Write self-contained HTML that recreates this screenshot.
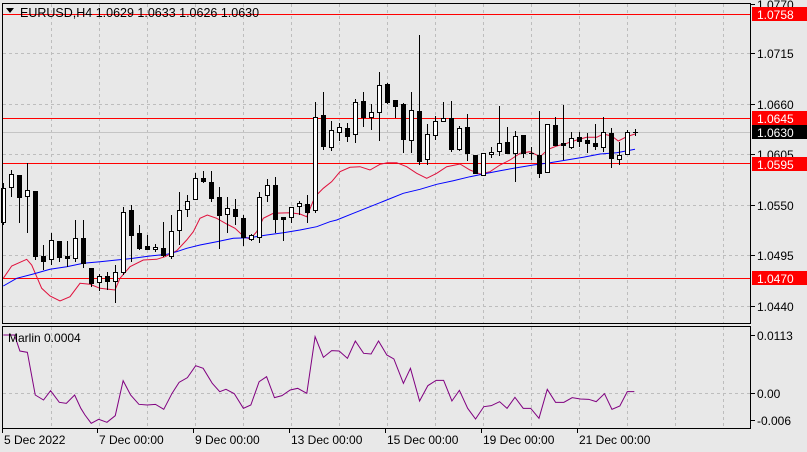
<!DOCTYPE html>
<html><head><meta charset="utf-8"><style>
html,body{margin:0;padding:0;background:#e8e8e8;width:807px;height:452px;overflow:hidden}
svg{display:block}
text{font-family:"Liberation Sans",sans-serif;font-size:12px;fill:#000}
</style></head><body>
<svg id="s" width="807" height="452" viewBox="0 0 807 452" xmlns="http://www.w3.org/2000/svg">
<rect width="807" height="452" fill="#e8e8e8"/>
<g id="grid" stroke="#bdbdbd" stroke-dasharray="3,3" stroke-width="1"></g>
<line x1="2" y1="132.5" x2="750" y2="132.5" stroke="#c4c4c4"/>
<g stroke="#ff0000" stroke-width="1">
<line x1="2" y1="14.5" x2="750" y2="14.5"/>
<line x1="2" y1="118.5" x2="750" y2="118.5"/>
<line x1="2" y1="163.5" x2="750" y2="163.5"/>
<line x1="2" y1="278.5" x2="750" y2="278.5"/>
</g>
<g id="ma"></g>
<g id="candles"></g>
<polyline fill="none" stroke="#800080" stroke-width="1" transform="translate(0,325) scale(0.4146,0.3333)" vector-effect="non-scaling-stroke" points="8,30 35,30 48,78 66,82 85,210 105,225 122,197 143,232 160,235 180,210 195,250 205,270 220,295 238,283 258,292 278,272 297,167 315,210 335,238 355,240 375,238 395,253 415,205 432,172 452,158 472,122 490,130 512,175 530,200 545,193 565,206 587,250 605,240 625,170 643,155 662,218 680,212 700,195 718,190 740,205 760,35 780,97 800,77 818,78 838,100 857,48 877,85 895,87 913,48 933,90 950,102 973,175 990,130 1012,228 1032,182 1052,166 1070,166 1090,228 1108,196 1128,250 1147,282 1167,245 1185,242 1205,230 1223,250 1242,217 1262,250 1280,250 1300,280 1320,193 1340,232 1360,232 1380,218 1400,222 1420,223 1438,230 1458,206 1476,253 1495,243 1513,200 1530,200"/>
<rect x="2.5" y="3.5" width="748" height="320" fill="none" stroke="#000"/>
<rect x="2.5" y="326.5" width="748" height="102" fill="none" stroke="#000"/>
<polygon points="6,8 14,8 10,13" fill="#000"/>
<text x="20" y="17" style="font-size:12.5px">EURUSD,H4  1.0629 1.0633 1.0626 1.0630</text>
<text x="8" y="342">Marlin 0.0004</text>
<g id="axis"></g>
</svg>
<script>
const NS="http://www.w3.org/2000/svg";
function el(p,t,a,txt){const e=document.createElementNS(NS,t);for(const k in a)e.setAttribute(k,a[k]);if(txt)e.textContent=txt;p.appendChild(e);return e;}
const g=document.getElementById('grid');
[53,104,154,205,255,306].forEach(y=>el(g,'line',{x1:3,x2:750,y1:y+.5,y2:y+.5}));
el(g,'line',{x1:3,x2:750,y1:393.5,y2:393.5});
for(let x=51;x<750;x+=48){el(g,'line',{x1:x+.5,x2:x+.5,y1:4,y2:323});el(g,'line',{x1:x+.5,x2:x+.5,y1:327,y2:428});}
const C=[[1,188,222,183,225],[1,174,187,170,197],[0,175,197,175,223],[1,190,196,163,233],[0,191,256,191,260],[0,256,261,245,270],[1,240,259,233,265],[0,241,257,241,262],[0,256,258,241,267],[1,238,258,220,262],[0,238,263,220,268],[0,268,283,268,287],[1,276,282,274,291],[0,276,281,272,290],[1,272,281,265,303],[1,212,272,207,275],[0,210,235,205,262],[0,233,248,225,250],[0,246,249,235,250],[1,247,249,244,252],[0,248,255,222,257],[1,231,256,215,259],[1,210,230,192,245],[1,201,209,195,217],[1,178,199,173,200],[0,178,181,171,183],[0,182,198,171,202],[0,197,215,187,249],[1,208,214,197,233],[0,209,216,199,225],[0,218,237,215,246],[1,235,239,234,241],[1,197,237,192,243],[1,185,195,179,202],[0,185,219,177,233],[0,217,219,217,241],[1,207,217,207,223],[1,203,206,201,215],[0,204,212,195,223],[1,117,210,102,213],
[0,115,146,92,150],[1,130,147,121,151],[1,127,132,123,141],[0,128,136,123,142],[1,102,134,99,143],[0,101,117,92,127],[1,112,117,104,130],[1,85,112,72,141],[0,84,102,83,104],[0,100,106,100,118],[0,104,139,103,153],[1,110,140,92,153],[0,111,161,35,165],[1,134,159,124,165],[1,121,135,116,140],[1,118,121,102,122],[0,118,149,101,152],[1,128,149,126,151],[0,127,153,114,161],[0,155,173,156,174],[1,153,175,153,176],[1,152,154,147,158],[1,143,151,106,156],[0,142,153,127,154],[1,136,153,131,182],[0,135,153,135,158],[0,153,153,147,160],[0,155,173,111,178],[1,124,172,124,173],[0,125,145,117,145],[0,143,145,105,160],[1,138,147,132,149],[0,137,141,132,147],[0,140,143,133,153],[0,143,146,124,150],[1,132,147,117,152],[0,133,158,128,168],[1,155,159,142,165],[1,132,154,130,155],[0,132,132,129,136]];
const cg=document.getElementById('candles');
C.forEach((c,i)=>{const x=Math.round(3.3+8*i);
 el(cg,'line',{x1:x+.5,x2:x+.5,y1:c[3],y2:c[4],stroke:'#000'});
 const h=Math.max(c[2]-c[1],0);
 if(h<1){el(cg,'line',{x1:x-2,x2:x+3,y1:c[1]+.5,y2:c[1]+.5,stroke:'#000'});}
 else if(c[0])el(cg,'rect',{x:x-1.5,y:c[1]+.5,width:4,height:h,fill:'#fff',stroke:'#000'});
 else el(cg,'rect',{x:x-2,y:c[1],width:5,height:h+1,fill:'#000'});
});
const m=document.getElementById('ma');
function pts(a,ox,oy){const r=[];for(let i=0;i<a.length;i+=2)r.push((ox+a[i]/3).toFixed(1)+','+(oy+a[i+1]/3).toFixed(1));return r;}
function pl(r,col){el(m,'polyline',{points:r.join(' '),fill:'none',stroke:col,'stroke-width':1});}
pl(pts([10,385,35,348,80,328,95,345,125,415,150,438,180,453,210,440,240,400,270,403,300,415,345,420,360,385,390,350,430,330,470,328,495,320,530,302,560,270,580,245,600,205,622,195,650,205,680,222,705,235,730,258,750,268,770,245,790,205,820,190,870,188,900,192],0,150).concat(pts([20,560,45,500,70,475,95,455,120,425,150,412,180,410,210,420,240,403,262,398,290,398,320,410,350,430,380,445,410,430,440,410,480,402,510,420,540,432,570,425,600,405,630,390,660,370,690,365,720,380,745,358,770,348,800,340,830,330,860,322,890,322,910,312,935,318,955,333,980,320,1005,312],300,30)),'#e0103c');
pl(pts([10,408,50,385,100,372,150,358,200,350,250,340,300,335,350,330,400,325,450,318,500,313,530,305,560,295,600,285,650,275,700,265,750,263,800,255,850,248,900,240,950,230,990,215],0,150).concat(pts([110,570,160,550,210,530,260,510,310,490,360,478,410,463,460,452,510,440,550,432,600,422,650,413,700,405,750,398,800,390,850,382,900,372,950,368,1005,358],300,30)),'#0000ff');
const ax=document.getElementById('axis');
[[4,'1.0770'],[53,'1.0715'],[104,'1.0660'],[154,'1.0605'],[205,'1.0550'],[255,'1.0495'],[306,'1.0440'],[335,'0.0113'],[393,'0.00'],[420,'-0.006']].forEach(([y,t])=>{
 el(ax,'line',{x1:751,x2:755,y1:y+.5,y2:y+.5,stroke:'#000'});el(ax,'text',{x:757,y:y+5},t);});
[[14,'1.0758','#ff0000'],[118,'1.0645','#ff0000'],[132,'1.0630','#000'],[164,'1.0595','#ff0000'],[278,'1.0470','#ff0000']].forEach(([y,t,c])=>{
 el(ax,'rect',{x:752,y:y-7,width:55,height:14,fill:c});el(ax,'text',{x:757,y:y+5,style:'fill:#fff'},t);});
[[2,'5 Dec 2022'],[97,'7 Dec 00:00'],[193,'9 Dec 00:00'],[289,'13 Dec 00:00'],[385,'15 Dec 00:00'],[481,'19 Dec 00:00'],[577,'21 Dec 00:00']].forEach(([x,t])=>{
 el(ax,'line',{x1:x+.5,x2:x+.5,y1:429,y2:433,stroke:'#000'});el(ax,'text',{x:x+2,y:444},t);});
</script>
</body></html>
